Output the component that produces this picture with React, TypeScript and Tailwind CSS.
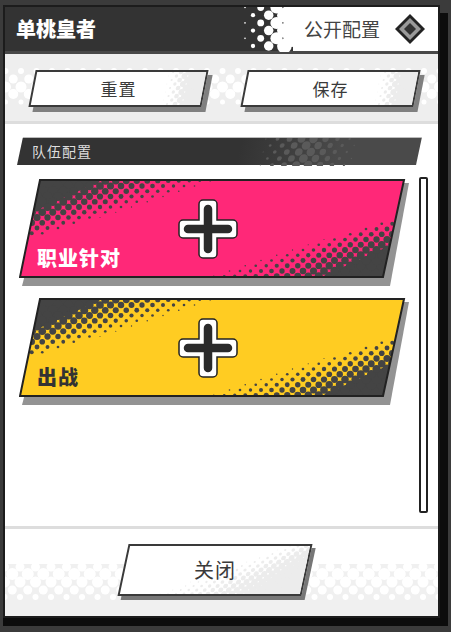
import React from "react";

const cjk = { fontFamily: '"Noto Sans CJK SC", "Noto Sans", sans-serif' };

type Dot = { x: number; y: number; r: number };

function CardArt({ fill }: { fill: string }) {
  const W = 392;
  const H = 108;
  const pts = "21,1 385,1 364,98 1,98";
  const cx = 193;
  const cy = 49.5;
  const inner = (x: number) => 34 - 0.46 * (x - 16);
  const outer = (x: number) => 61 - 0.32 * (x - 11);
  const dots: Dot[] = [];
  for (let row = 0; row < 24; row++) {
    const y = 1.75 + row * 5.25;
    for (let col = -2; col < 26; col++) {
      const x = col * 10.5 + (row % 2 ? 5.25 : 0) + 2.25;
      const a = inner(x);
      const b = outer(x);
      const t = (y - a) / (b - a);
      if (t > 1.02 || t < -0.7) continue;
      const r = 0.4 + Math.pow((1 - t) / 1.7, 0.6) * 5.0;
      dots.push({ x, y, r });
    }
  }
  const band = (
    <g fill="#444444">
      <polygon points={`-10,${inner(-10) - 2} 240,${inner(240) - 2} 240,-10 -10,-10`} />
      {dots.map((d, i) => (
        <circle key={i} cx={d.x} cy={d.y} r={d.r} />
      ))}
    </g>
  );
  const id = "clip" + fill.replace("#", "");
  return (
    <svg width={W} height={H} viewBox={`0 0 ${W} ${H}`} className="absolute left-0 top-0">
      <defs>
        <clipPath id={id}>
          <polygon points={pts} />
        </clipPath>
      </defs>
      <polygon points="30,4 390,4 371,107 3,107" fill="#939393" />
      <polygon points={pts} fill={fill} />
      <g clipPath={`url(#${id})`}>
        {band}
        <g transform={`rotate(180 ${cx} ${cy})`}>{band}</g>
      </g>
      <polygon points={pts} fill="none" stroke="#222222" strokeWidth="2" />
    </svg>
  );
}

function Plus() {
  return (
    <svg width="60" height="60" viewBox="0 0 60 60" className="relative">
      <path d="M25 1 h10 a4 4 0 0 1 4 4 v16 h16 a4 4 0 0 1 4 4 v10 a4 4 0 0 1-4 4 h-16 v16 a4 4 0 0 1-4 4 h-10 a4 4 0 0 1-4-4 v-16 h-16 a4 4 0 0 1-4-4 v-10 a4 4 0 0 1 4-4 h16 v-16 a4 4 0 0 1 4-4 z" fill="#ffffff" stroke="#222222" strokeWidth="1.5" />
      <path d="M30 10 v40 M10 30 h40" stroke="#2a2a2a" strokeWidth="8.5" strokeLinecap="round" fill="none" />
    </svg>
  );
}

function Card({ fill, label, labelClass }: { fill: string; label: string; labelClass: string }) {
  return (
    <div className="relative h-[108px] w-[392px]">
      <CardArt fill={fill} />
      <div className="relative flex h-[99px] items-center justify-center pr-[14px]">
        <Plus />
      </div>
      <span
        className={`absolute left-[18px] top-[67px] text-[20px] font-black leading-[24px] tracking-[1px] ${labelClass}`}
        style={cjk}
      >
        {label}
      </span>
    </div>
  );
}

function Halftone({ w, h, off, rows }: { w: number; h: number; off: number; rows: { y: number; r: number }[] }) {
  const s = 15.5;
  return (
    <svg width={w} height={h} className="absolute left-0 top-0" aria-hidden>
      {rows.map((row, i) =>
        Array.from({ length: Math.ceil(w / s) + 2 }).map((_, j) => (
          <circle key={`${i}-${j}`} cx={j * s + off + (i % 2 ? s / 2 : 0)} cy={row.y} r={row.r} fill="#ffffff" />
        ))
      )}
    </svg>
  );
}

function ButtonDots({ w, h, outer, solid }: { w: number; h: number; outer: (y: number) => number; solid: (y: number) => number }) {
  const items: Dot[] = [];
  for (let r = 0; r < Math.ceil(h / 4) + 2; r++) {
    for (let c = 0; c < Math.ceil(w / 8) + 2; c++) {
      const x = c * 8 + (r % 2 ? 4 : 0);
      const y = r * 4;
      const a = outer(y);
      const b = solid(y);
      const t = (x - a) / (b - a);
      if (t < 0 || t > 1.2) continue;
      items.push({ x, y, r: 0.4 + t * 3.6 });
    }
  }
  const poly = `${solid(0)},0 ${w + 4},0 ${w + 4},${h} ${solid(h)},${h}`;
  return (
    <svg width={w} height={h} className="absolute left-0 top-0" aria-hidden>
      <polygon points={poly} fill="#ececec" />
      {items.map((d, i) => (
        <circle key={i} cx={d.x} cy={d.y} r={d.r} fill="#ececec" />
      ))}
    </svg>
  );
}

function SkewButton({
  label, w, h, textSize, shadow, skew, iw, ih, outer, solid,
}: {
  label: string; w: string; h: string; textSize: string; shadow: string; skew: string; iw: number; ih: number;
  outer: (y: number) => number; solid: (y: number) => number;
}) {
  return (
    <div className={`relative ${w} ${h}`}>
      <div className={`absolute inset-0 ${skew} overflow-hidden border-[2px] border-[#3a3a3a] bg-white ${shadow}`}>
        <ButtonDots w={iw} h={ih} outer={outer} solid={solid} />
      </div>
      <div className={`relative flex h-full items-center justify-center tracking-[1px] text-[#3a3a3a] ${textSize}`} style={cjk}>
        {label}
      </div>
    </div>
  );
}

function HeaderDots() {
  const items: Dot[] = [];
  for (let r = 0; r < 6; r++) {
    for (let c = 0; c < 4; c++) {
      const x = r % 2 ? 10 + c * 15.7 : 2 + c * 15.7;
      const y = r * 7.7 + 0.5;
      if (x > 50) continue;
      items.push({ x, y, r: 0.5 + x * 0.165 });
    }
  }
  return (
    <svg width="50" height="45" className="block shrink-0" aria-hidden>
      {items.map((d, i) => (
        <circle key={i} cx={d.x} cy={d.y} r={d.r} fill="#ffffff" />
      ))}
    </svg>
  );
}

function SectionDots() {
  const items: Dot[] = [];
  for (let r = 0; r < 5; r++) {
    for (let c = 0; c < 8; c++) {
      const x = c * 12 + (r % 2 ? 6 : 0);
      const y = r * 6.5 + 1;
      const k = 1 - Math.abs(x - 44) / 48;
      if (k <= 0) continue;
      items.push({ x, y, r: 0.5 + k * 4 });
    }
  }
  return (
    <svg width="96" height="28" className="absolute left-[243px] top-0" aria-hidden>
      {items.map((d, i) => (
        <circle key={i} cx={d.x} cy={d.y} r={d.r} fill="#5a5a5a" />
      ))}
    </svg>
  );
}

const smallOuter = () => 132;
const smallSolid = () => 155;
const bigOuter = (y: number) => 155 - (y - 1) * 2.51;
const bigSolid = (y: number) => 185 - (y - 8) * 1.3;

export default function App() {
  return (
    <div className="h-[632px] w-[451px] overflow-hidden bg-[#3b3b3b] pl-[3px] pt-[5px]">
      <div className="flex h-[613px] w-[437px] flex-col border-[2px] border-[#1c1c1c] bg-white shadow-[8px_8px_0_#0c0c0c,0_8px_0_#0c0c0c]">
        {/* header */}
        <div className="flex h-[47px] shrink-0 border-b-[3px] border-[#484848] bg-white">
          <div className="flex w-[238px] items-center bg-[#333333] pl-[11px] text-[20px] font-black text-white" style={cjk}>
            单桃皇者
          </div>
          <div className="bg-[#333333]">
            <HeaderDots />
          </div>
          <div className="flex flex-1 items-center pl-[11px] text-[19px] text-[#444444]" style={cjk}>
            <span>公开配置</span>
            <svg width="32" height="32" viewBox="0 0 32 32" className="ml-[14px]">
              <polygon points="16,1 31,16 16,31 1,16" fill="#222222" />
              <polygon points="16,5 27,16 16,27 5,16" fill="#999999" />
              <polygon points="16,10 22,16 16,22 10,16" fill="#333333" />
            </svg>
          </div>
        </div>

        {/* toolbar */}
        <div className="relative flex h-[70px] shrink-0 items-start gap-[39px] border-b-[3px] border-[#dddddd] bg-[#eeeeee] pl-[27px] pt-[16px]">
          <Halftone
            w={433}
            h={67}
            off={0.5}
            rows={[
              { y: 17, r: 3 },
              { y: 25, r: 4.5 },
              { y: 33, r: 5.5 },
              { y: 40, r: 5 },
              { y: 48, r: 2.5 },
            ]}
          />
          <SkewButton label="重置" w="w-[173px]" h="h-[37px]" textSize="text-[17px]" shadow="shadow-[5px_5px_0_#808080]" skew="skew-x-[-11deg]" iw={169} ih={33} outer={smallOuter} solid={smallSolid} />
          <SkewButton label="保存" w="w-[173px]" h="h-[37px]" textSize="text-[17px]" shadow="shadow-[5px_5px_0_#808080]" skew="skew-x-[-11deg]" iw={169} ih={33} outer={smallOuter} solid={smallSolid} />
        </div>

        {/* body */}
        <div className="flex min-h-0 flex-1 pt-[13px]">
          <div className="flex w-[414px] flex-col pl-[12px]">
            <div className="relative ml-[3px] h-[28px] w-[399px] shrink-0 -skew-x-12 border-t border-[#bbbbbb] bg-[linear-gradient(90deg,#333333_55%,#4a4a4a_80%)]">
              <SectionDots />
            </div>
            <div className="relative mt-[-28px] flex h-[28px] items-center pl-[15px] text-[14px] tracking-[1px] text-[#dddddd]" style={cjk}>
              队伍配置
            </div>
            <div className="mt-[14px] flex flex-col gap-[11px] pl-[2px]">
              <Card fill="#ff2878" label="职业针对" labelClass="text-white" />
              <Card fill="#ffcc22" label="出战" labelClass="text-[#333333]" />
            </div>
          </div>
          <div className="mt-[40px] h-[336px] w-[9px] rounded-[2px] border-[2px] border-[#222222] bg-white" />
        </div>

        {/* footer */}
        <div className="relative flex h-[90px] shrink-0 justify-center border-t-[3px] border-[#dddddd] bg-[linear-gradient(180deg,#ffffff_40%,#f0f0f0_40%)] pr-[13px] pt-[15px]">
          <Halftone
            w={433}
            h={87}
            off={-0.5}
            rows={[
              { y: 38, r: 4.5 },
              { y: 45, r: 6 },
              { y: 53, r: 5.5 },
              { y: 61, r: 4.5 },
              { y: 68, r: 3 },
            ]}
          />
          <SkewButton label="关闭" w="w-[184px]" h="h-[52px]" textSize="text-[20px]" shadow="shadow-[4px_4px_0_#777777]" skew="skew-x-[-12deg]" iw={180} ih={48} outer={bigOuter} solid={bigSolid} />
        </div>
      </div>
    </div>
  );
}
